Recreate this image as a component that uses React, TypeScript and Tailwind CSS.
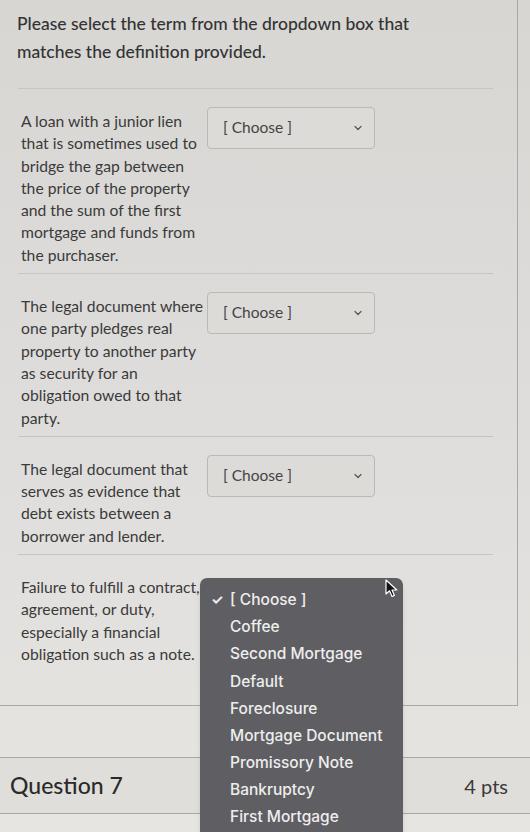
import { ChevronDown } from "lucide-react";

type Item = {
  lines: string[];
  open?: boolean;
};

const items: Item[] = [
  {
    lines: [
      "A loan with a junior lien",
      "that is sometimes used to",
      "bridge the gap between",
      "the price of the property",
      "and the sum of the first",
      "mortgage and funds from",
      "the purchaser.",
    ],
  },
  {
    lines: [
      "The legal document where",
      "one party pledges real",
      "property to another party",
      "as security for an",
      "obligation owed to that",
      "party.",
    ],
  },
  {
    lines: [
      "The legal document that",
      "serves as evidence that",
      "debt exists between a",
      "borrower and lender.",
    ],
  },
  {
    lines: [
      "Failure to fulfill a contract,",
      "agreement, or duty,",
      "especially a financial",
      "obligation such as a note.",
    ],
    open: true,
  },
];

const options = [
  "[ Choose ]",
  "Coffee",
  "Second Mortgage",
  "Default",
  "Foreclosure",
  "Mortgage Document",
  "Promissory Note",
  "Bankruptcy",
  "First Mortgage",
];

function ChooseBox() {
  return (
    <div className="w-[168px] h-[42px] shrink-0 border border-[#bab9b6] rounded-[4px] bg-[#dcdbd8] flex items-center justify-between pl-[15px] pr-[10px]">
      <span className="text-[15.5px] text-[#444]">[ Choose ]</span>
      <ChevronDown size={12} strokeWidth={2.4} className="text-[#555]" />
    </div>
  );
}

function Cursor() {
  return (
    <svg width="14" height="20" viewBox="0 0 14 20" className="absolute left-[385px] top-[579px]">
      <path
        d="M1 1 L1 15 L4.5 11.8 L7 17.5 L9.4 16.4 L7 11 L11.8 11 Z"
        fill="#111"
        stroke="#fff"
        strokeWidth="1.2"
        strokeLinejoin="round"
      />
    </svg>
  );
}

export default function App() {
  return (
    <div
      className="relative w-[530px] h-[832px] overflow-hidden bg-linear-to-b from-[#d7d6d3] via-[#dedddb] to-[#e6e5e2] text-[#3a3a3a]"
      style={{ fontFamily: "Lato, 'Open Sans', sans-serif" }}
    >
      {/* question body */}
      <div className="w-[518px] border-r border-b border-[#a9a8a5]">
        <div className="pl-[17px] pt-[10px] pb-[22px]">
          <p className="text-[17.5px] leading-[28px] text-[#333] font-medium">
            Please select the term from the dropdown box that
            <br />
            matches the definition provided.
          </p>
        </div>

        <div className="ml-[18px] mr-[24px] border-t border-[#c6c5c2]">
          {items.map((item, i) => (
            <div
              key={i}
              className={
                "flex pl-[3px] pt-[18px] " +
                (i < items.length - 1 ? "pb-[7px] border-b border-[#c6c5c2]" : "pb-[40px]")
              }
            >
              <p className="w-[186px] shrink-0 mt-[3px] text-[15.7px] leading-[22.3px] whitespace-nowrap">
                {item.lines.map((l) => (
                  <span key={l} className="block">
                    {l}
                  </span>
                ))}
              </p>
              {!item.open && <ChooseBox />}
            </div>
          ))}
        </div>
      </div>

      <div className="h-[51px]" />

      {/* next question header */}
      <div className="border-t border-b border-[#a9a8a5] h-[57px] bg-[#dfdedb] flex items-center justify-between pl-[10px] pr-[22px]">
        <span className="text-[23px] font-medium text-[#2a2a2a]">Question 7</span>
        <span className="text-[20px] text-[#3a3a3a]">4 pts</span>
      </div>

      {/* open dropdown menu */}
      <div
        className="absolute left-[200px] top-[578px] w-[203px] h-[280px] rounded-[7px] bg-[#5f5e62] pt-[8px] shadow-md"
        style={{ fontFamily: "Inter, 'Liberation Sans', sans-serif" }}
      >
        {options.map((opt, i) => (
          <div key={opt} className="relative h-[27.2px] flex items-center pl-[30px] text-[15.5px] font-medium text-[#eeeeee]">
            {i === 0 && <span className="absolute left-[11px] text-[14px] font-bold">✓</span>}
            {opt}
          </div>
        ))}
      </div>

      <Cursor />
    </div>
  );
}
